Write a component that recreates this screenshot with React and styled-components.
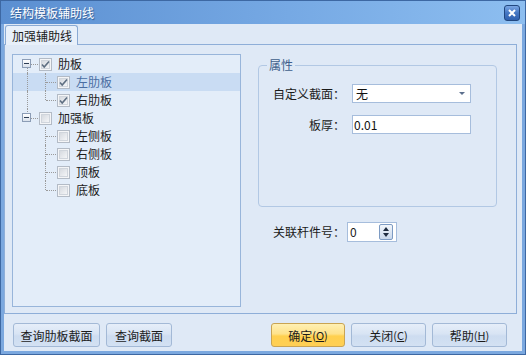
import React from "react"
import styled, { createGlobalStyle } from "styled-components"

const GlobalStyle = createGlobalStyle`
  html, body {
    margin: 0;
    padding: 0;
    background: #ffffff;
  }
  body {
    font-family: "Noto Sans CJK SC", "Noto Sans", sans-serif;
    font-size: 12px;
    line-height: 16px;
    color: #1b1b1b;
  }
`

const Window = styled.div`
  width: 526px;
  height: 355px;
  box-sizing: border-box;
  display: flex;
  flex-direction: column;
  border: 1px solid #3d68a3;
  background: #7ba8df;
`

const TitleBar = styled.div`
  height: 23px;
  flex: none;
  display: flex;
  align-items: center;
  justify-content: space-between;
  padding: 0 5px 0 9px;
  background: linear-gradient(to right, #5b8fd1 0%, #76a9e4 55%, #8dbef0 100%);
`

const Title = styled.span`
  color: #ffffff;
  text-shadow: 1px 1px 1px #2c5790;
  letter-spacing: 0;
`

const CloseButton = styled.div`
  width: 16px;
  height: 16px;
  box-sizing: border-box;
  border: 1px solid #21477f;
  border-radius: 3px;
  background: linear-gradient(to bottom, #7aa6e4 0%, #4577c3 50%, #2f60ae 100%);
  display: flex;
  align-items: center;
  justify-content: center;
`

const Body = styled.div`
  flex: 1;
  margin: 0 3px 3px 3px;
  display: flex;
  flex-direction: column;
  background: #dfe9f6;
`

const TabStrip = styled.div`
  height: 20px;
  flex: none;
  display: flex;
  align-items: flex-end;
  padding-left: 1px;
`

const Tab = styled.div`
  height: 20px;
  box-sizing: border-box;
  padding: 2px 5px 0 6px;
  border: 1px solid #8aaad4;
  border-bottom: none;
  border-radius: 3px 3px 0 0;
  background: #e8f0fa;
  margin-bottom: -1px;
  position: relative;
  z-index: 1;
`

const TabPage = styled.div`
  height: 270px;
  box-sizing: border-box;
  margin-right: 5px;
  border: 1px solid #8eaed8;
  padding: 9px 0 0 7px;
  display: flex;
  align-items: flex-start;
`

const TreePanel = styled.div`
  width: 229px;
  height: 253px;
  box-sizing: border-box;
  border: 1px solid #98b5da;
  background: #e3edf9;
`

const TreeRow = styled.div`
  height: 18px;
  display: flex;
  align-items: center;
  padding-left: 5px;
  background: ${p => (p.$selected ? "#c9dcf3" : "transparent")};
  color: ${p => (p.$selected ? "#4a6da2" : "#1b1b1b")};
`

const Cell = styled.div`
  width: 18px;
  height: 18px;
  flex: none;
  position: relative;

  &::before {
    content: "";
    display: ${p => (p.$v ? "block" : "none")};
    position: absolute;
    left: 9px;
    top: ${p => (p.$v === "bottom" ? "9px" : "0")};
    height: ${p => (p.$v === "full" ? "18px" : "9px")};
    border-left: 1px dotted #9a9a9a;
  }

  &::after {
    content: "";
    display: ${p => (p.$h ? "block" : "none")};
    position: absolute;
    left: 10px;
    top: 9px;
    width: 10px;
    border-top: 1px dotted #9a9a9a;
  }
`

const Expander = styled.div`
  position: absolute;
  left: 4px;
  top: 4px;
  width: 9px;
  height: 9px;
  box-sizing: border-box;
  border: 1px solid #8c9db6;
  background: linear-gradient(to bottom, #ffffff, #d9e1ec);
  z-index: 1;

  &::after {
    content: "";
    position: absolute;
    left: 1px;
    top: 3px;
    width: 5px;
    height: 1px;
    background: #2d3d55;
  }
`

const CheckBox = styled.div`
  width: 13px;
  height: 13px;
  flex: none;
  margin-left: 3px;
  display: flex;
`

const TreeLabel = styled.span`
  margin-left: 6px;
  white-space: nowrap;
`

const RightColumn = styled.div`
  margin-left: 17px;
  display: flex;
  flex-direction: column;
`

const GroupBox = styled.fieldset`
  margin: 3px 0 0 0;
  padding: 0;
  width: 239px;
  height: 150px;
  box-sizing: border-box;
  border: 1px solid #b2c8e4;
  border-radius: 4px;
`

const GroupTitle = styled.legend`
  margin-left: 8px;
  padding: 0 2px;
  color: #3e5e8b;
  line-height: 16px;
`

const FormGrid = styled.div`
  display: grid;
  grid-template-columns: 72px 119px;
  column-gap: 7px;
  row-gap: 12px;
  padding: 11px 0 0 14px;
`

const FieldLabel = styled.label`
  justify-self: end;
  align-self: center;
  white-space: nowrap;
`

const Field = styled.div`
  height: 19px;
  box-sizing: border-box;
  border: 1px solid #a6bddc;
  background: #ffffff;
  display: flex;
  align-items: center;
  justify-content: space-between;
  padding: 0 5px 0 ${p => p.$pad || 3}px;
  color: #111;
`

const DropArrow = styled.span`
  width: 0;
  height: 0;
  border-left: 3px solid transparent;
  border-right: 3px solid transparent;
  border-top: 3px solid #5b6f8d;
`

const SpinRow = styled.div`
  margin-top: 15px;
  padding-left: 15px;
  display: flex;
  align-items: center;
  gap: 2px;
`

const SpinLabel = styled.label`
  width: 72px;
  white-space: nowrap;
`

const SpinBox = styled.div`
  width: 50px;
  height: 20px;
  box-sizing: border-box;
  border: 1px solid #a6bddc;
  background: #ffffff;
  display: flex;
  align-items: center;
  justify-content: space-between;
  padding: 0 3px 0 2px;
`

const SpinButtons = styled.div`
  width: 14px;
  height: 16px;
  box-sizing: border-box;
  border: 1px solid #7d9bc3;
  border-radius: 2px;
  background: linear-gradient(to bottom, #f2f6fb, #c9d8ec);
  display: flex;
  flex-direction: column;
  align-items: center;
  justify-content: center;
  gap: 2px;
`

const Tri = styled.span`
  width: 0;
  height: 0;
  border-left: 3px solid transparent;
  border-right: 3px solid transparent;
  ${p => (p.$up ? "border-bottom: 4px solid #1f2c40;" : "border-top: 4px solid #1f2c40;")}
`

const ButtonBar = styled.div`
  flex: 1;
  display: flex;
  align-items: flex-start;
  justify-content: space-between;
  padding: 9px 15px 0 9px;
`

const ButtonGroup = styled.div`
  display: flex;
  gap: ${p => p.$gap || 6}px;
`

const Button = styled.button`
  width: ${p => p.$w}px;
  height: 24px;
  box-sizing: border-box;
  padding: 0;
  border: 1px solid ${p => (p.$primary ? "#c9a453" : "#a3b9d6")};
  border-radius: 3px;
  background: ${p =>
    p.$primary
      ? "linear-gradient(to bottom, #fff0b4 0%, #fee28a 45%, #ffd04e 55%, #ffcf55 100%)"
      : "linear-gradient(to bottom, #e6eef9 0%, #d8e4f4 45%, #cddcf0 55%, #d3e1f3 100%)"};
  font-family: inherit;
  font-size: 12px;
  color: #1b1b1b;
  display: flex;
  align-items: center;
  justify-content: center;
`

const Key = styled.span`
  font-size: 11px;
  & u { text-underline-offset: 1px; }
`

const Check = ({ checked }) => (
  <CheckBox>
    <svg width="13" height="13" viewBox="0 0 13 13">
      <defs>
        <linearGradient id="cbg" x1="0" y1="0" x2="1" y2="1">
          <stop offset="0" stopColor="#d4d8de" />
          <stop offset="1" stopColor="#f6f7f9" />
        </linearGradient>
      </defs>
      <rect x="0.5" y="0.5" width="12" height="12" fill="#f4f5f7" stroke="#b3bbc6" />
      <rect x="2.5" y="2.5" width="8" height="8" fill="url(#cbg)" stroke="#d0d5dc" />
      {checked && (
        <path d="M3 6.5 L5.2 9 L10 3.5" fill="none" stroke="#5f6f82" strokeWidth="1.6" />
      )}
    </svg>
  </CheckBox>
)

const tree = [
  { label: "肋板", root: true, checked: true, cells: [{ v: "bottom", h: true, box: true }] },
  { label: "左肋板", checked: true, selected: true, cells: [{ v: "full" }, { v: "full", h: true }] },
  { label: "右肋板", checked: true, cells: [{ v: "full" }, { v: "top", h: true }] },
  { label: "加强板", root: true, cells: [{ v: "top", h: true, box: true }] },
  { label: "左侧板", cells: [{}, { v: "full", h: true }] },
  { label: "右侧板", cells: [{}, { v: "full", h: true }] },
  { label: "顶板", cells: [{}, { v: "full", h: true }] },
  { label: "底板", cells: [{}, { v: "top", h: true }] },
]

export default function App() {
  return (
    <>
      <GlobalStyle />
      <Window>
        <TitleBar>
          <Title>结构模板辅助线</Title>
          <CloseButton>
            <svg width="8" height="8" viewBox="0 0 8 8">
              <path d="M1 1 L7 7 M7 1 L1 7" stroke="#ffffff" strokeWidth="2" />
            </svg>
          </CloseButton>
        </TitleBar>
        <Body>
          <TabStrip>
            <Tab>加强辅助线</Tab>
          </TabStrip>
          <TabPage>
            <TreePanel>
              {tree.map(item => (
                <TreeRow key={item.label} $selected={item.selected}>
                  {item.cells.map((c, i) => (
                    <Cell key={i} $v={c.v} $h={c.h}>
                      {c.box && <Expander />}
                    </Cell>
                  ))}
                  <Check checked={item.checked} />
                  <TreeLabel>{item.label}</TreeLabel>
                </TreeRow>
              ))}
            </TreePanel>
            <RightColumn>
              <GroupBox>
                <GroupTitle>属性</GroupTitle>
                <FormGrid>
                  <FieldLabel>自定义截面：</FieldLabel>
                  <Field>
                    <span>无</span>
                    <DropArrow />
                  </Field>
                  <FieldLabel>板厚：</FieldLabel>
                  <Field $pad={1}>0.01</Field>
                </FormGrid>
              </GroupBox>
              <SpinRow>
                <SpinLabel>关联杆件号：</SpinLabel>
                <SpinBox>
                  <span>0</span>
                  <SpinButtons>
                    <Tri $up />
                    <Tri />
                  </SpinButtons>
                </SpinBox>
              </SpinRow>
            </RightColumn>
          </TabPage>
          <ButtonBar>
            <ButtonGroup>
              <Button $w={87}>查询肋板截面</Button>
              <Button $w={66}>查询截面</Button>
            </ButtonGroup>
            <ButtonGroup>
              <Button $w={74} $primary>
                确定<Key>(<u>O</u>)</Key>
              </Button>
              <Button $w={75}>
                关闭<Key>(<u>C</u>)</Key>
              </Button>
              <Button $w={75}>
                帮助<Key>(<u>H</u>)</Key>
              </Button>
            </ButtonGroup>
          </ButtonBar>
        </Body>
      </Window>
    </>
  )
}
